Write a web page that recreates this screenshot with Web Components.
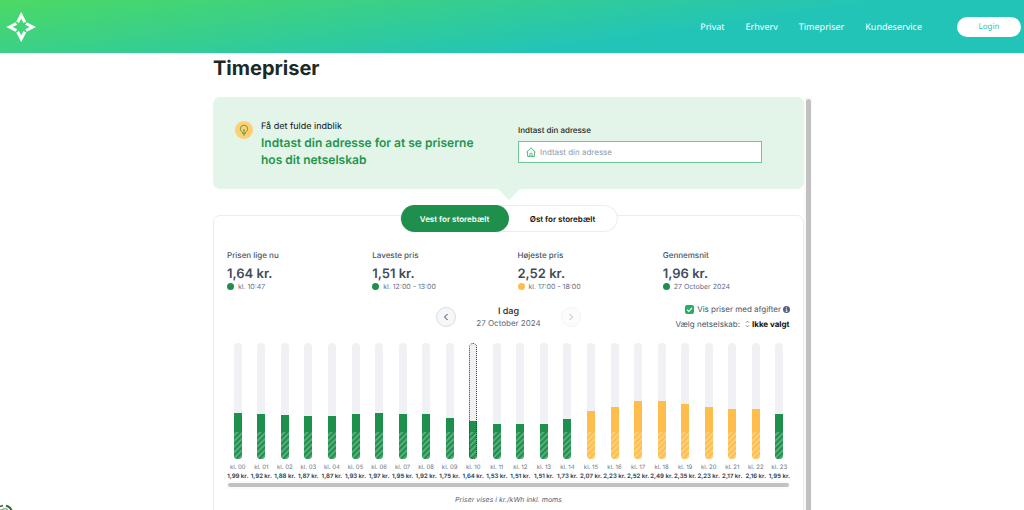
<!DOCTYPE html>
<html lang="da">
<head>
<meta charset="utf-8">
<meta name="viewport" content="width=device-width, initial-scale=1">
<title>Timepriser</title>
<style>
  html, body { margin: 0; height: 100%; }
  body {
    overflow: hidden;
    background: #fff;
    font-family: Inter, "Liberation Sans", sans-serif;
    text-rendering: geometricPrecision;
    color: #475467;
    --green: #1f8f4e;
    --amber: #ffbe4c;
    --line: #ececee;
  }
</style>
</head>
<body>
<price-page></price-page>

<script>
const define = (name, html, setup) => {
  const template = document.createElement('template');
  template.innerHTML = '<style>*{box-sizing:border-box} button,input,select{text-rendering:inherit}</style>' + html;
  customElements.define(name, class extends HTMLElement {
    connectedCallback() {
      if (this.shadowRoot) return;
      const root = this.attachShadow({ mode: 'open' });
      root.append(template.content.cloneNode(true));
      if (setup) setup(this, root);
    }
  });
};

define('site-header', `
  <style>
    :host { display: block; flex: none; }
    header {
      display: flex; align-items: center; height: 53px; padding: 0 3px 0 6px;
      background: linear-gradient(172deg, #4cd964, #22c4b8 65%);
      font-family: "Noto Sans", sans-serif; font-size: 9px;
    }
    .logo { display: block; width: 30px; height: 30px; }
    nav { display: flex; gap: 21px; margin-left: auto; margin-right: 35px; }
    nav a { color: #fff; text-decoration: none; }
    button {
      width: 64px; height: 20px; padding: 0; border: 0; border-radius: 10px;
      background: #fff; color: #2cc5b6; font: inherit; font-size: 8px;
    }
  </style>
  <header>
    <a class="logo" href="#" aria-label="Forside">
      <svg width="30" height="30" viewBox="0 0 30 30" fill="none" stroke="#fff" stroke-width="3">
        <path d="M11.600 10.300 15.200 3.200 18.800 10.300M11.600 19.700 15.200 26.800 18.800 19.700M10.400 11.500 3.600 15 10.400 18.500M20 11.500 26.800 15 20 18.500"/>
      </svg>
    </a>
    <nav>
      <a href="#">Privat</a><a href="#">Erhverv</a><a href="#">Timepriser</a><a href="#">Kundeservice</a>
    </nav>
    <button type="button">Login</button>
  </header>`);

define('address-banner', `
  <style>
    :host { display: block; }
    section {
      position: relative; display: grid; grid-template-columns: 1fr 244px; align-items: center;
      min-height: 92px; padding: 2px 42px 0 22px; border-radius: 7px; background: #e3f4e9;
    }
    section::after {
      content: ""; position: absolute; top: 100%; left: 50%; margin-left: -11px;
      border: 11px solid transparent; border-top-color: #e3f4e9; border-bottom: 0;
    }
    .intro { display: flex; gap: 8px; padding-right: 32px; }
    .bulb { flex: none; }
    p, h2 { margin: 0; }
    p { font-size: 9px; line-height: 12px; color: #111; }
    h2 { font-size: 12px; line-height: 17px; font-weight: 600; color: #23954f; margin-top: 1px; }
    label { display: block; font-size: 8px; line-height: 10px; font-weight: 500; color: #1d2b25; }
    .field {
      display: flex; align-items: center; gap: 4px; height: 22px; margin-top: 6px; padding: 0 7px;
      border: 1px solid #6fc793; background: #fff;
    }
    input { flex: 1; min-width: 0; border: 0; padding: 0; outline: 0; background: none; font: 8px Inter, sans-serif; }
    input::placeholder { color: #8f99ab; opacity: 1; }
  </style>
  <section>
    <div class="intro">
      <svg class="bulb" width="18" height="18" viewBox="0 0 18 18">
        <circle cx="9" cy="9" r="9" fill="#ffcf74"/>
        <path d="M7.600 11.400C6.200 10.400 5.300 9.300 5.300 7.900a3.700 3.700 0 0 1 7.400 0c0 1.400-.9 2.500-2.300 3.500v1.200H7.600zM9 12V9.300M7.900 8.600 9 9.500l1.100-.9M8 13.900h2" fill="none" stroke="#4f9a45" stroke-width=".9"/>
      </svg>
      <div>
        <p>Få det fulde indblik</p>
        <h2>Indtast din adresse for at se priserne hos dit netselskab</h2>
      </div>
    </div>
    <div>
      <label for="address">Indtast din adresse</label>
      <div class="field">
        <svg width="10" height="10" viewBox="0 0 10 10" fill="none" stroke="#3fae6c" stroke-width=".9" stroke-linejoin="round">
          <path d="M.5 5.200 5 .8l4.500 4.400M1.600 4.400v5h6.800v-5M3.900 9.200V7.300a1.100 1.100 0 0 1 2.200 0v1.900"/>
        </svg>
        <input id="address" type="text" placeholder="Indtast din adresse">
      </div>
    </div>
  </section>`);

define('region-toggle', `
  <style>
    :host { display: flex; width: 218px; height: 27px; border: 1px solid var(--line); border-radius: 14px; background: #fff; }
    button {
      flex: 1; margin: -1px 0; padding: 0; border: 0; border-radius: 14px; background: none;
      font: 600 8px Inter, sans-serif; color: #111;
    }
    button[aria-pressed="true"] { background: var(--green); color: #fff; }
  </style>
  <button type="button" aria-pressed="true">Vest for storebælt</button>
  <button type="button" aria-pressed="false">Øst for storebælt</button>`);

define('price-stat', `
  <style>
    :host { display: block; }
    .label { font-size: 8px; line-height: 10px; font-weight: 500; }
    .value { margin-top: 6px; font-size: 13px; line-height: 16px; font-weight: 600; color: #414b5a; }
    .when { display: flex; align-items: center; gap: 4px; font-size: 7px; line-height: 9px; color: #667085; }
    i { width: 7px; height: 7px; border-radius: 50%; background: var(--green); }
    :host([high]) i { background: var(--amber); }
  </style>
  <div class="label"><slot name="label"></slot></div>
  <div class="value"><slot></slot></div>
  <div class="when"><i></i><span><slot name="when"></slot></span></div>`);

define('day-picker', `
  <style>
    :host { display: flex; align-items: center; justify-content: space-between; width: 146px; }
    button {
      display: grid; place-items: center; width: 20px; height: 20px; padding: 0;
      border: 1px solid #d9dce2; border-radius: 50%; background: #f6f7f9; color: #344054;
    }
    button:disabled { border-color: #f3f4f5; background: #fcfcfc; color: #b4bac4; }
    div { text-align: center; font-size: 8px; line-height: 11px; color: #5d687b; }
    strong { display: block; font-size: 9px; line-height: 13px; font-weight: 500; color: #1c2430; }
  </style>
  <button type="button" aria-label="Forrige dag"><svg width="6" height="8" viewBox="0 0 6 8" fill="none" stroke="currentColor"><path d="M4.500 1 1.500 4l3 3"/></svg></button>
  <div><strong>I dag</strong>27 October 2024</div>
  <button type="button" aria-label="Næste dag" disabled><svg width="6" height="8" viewBox="0 0 6 8" fill="none" stroke="currentColor"><path d="m1.500 1 3 3-3 3"/></svg></button>`);

define('price-options', `
  <style>
    :host { display: flex; flex-direction: column; align-items: flex-end; gap: 3px; font-size: 8px; line-height: 12px; color: #475467; }
    div { display: flex; align-items: center; }
    input {
      appearance: none; width: 9px; height: 9px; margin: 0 3px 0 0; border-radius: 2px;
      background: #27ae60 url("data:image/svg+xml,%3Csvg xmlns='http://www.w3.org/2000/svg' viewBox='0 0 9 9'%3E%3Cpath d='M2 4.600 3.800 6.300 7 2.900' fill='none' stroke='white' stroke-width='1.200'/%3E%3C/svg%3E");
    }
    .info { margin-left: 2px; }
    .arrows { margin: 0 2px 0 5px; }
    select { appearance: none; border: 0; padding: 0; background: none; font: 700 8px/12px Inter, sans-serif; color: #111; }
  </style>
  <div>
    <input id="fees" type="checkbox" checked><label for="fees">Vis priser med afgifter</label>
    <svg class="info" width="7" height="7" viewBox="0 0 7 7"><circle cx="3.500" cy="3.500" r="3.500" fill="#56627a"/><path d="M3.500 1.300v1M2.800 3.200h.8v2.100M2.600 5.400h1.900" stroke="#fff" stroke-width=".8" fill="none"/></svg>
  </div>
  <div>
    <label for="grid">Vælg netselskab:</label>
    <svg class="arrows" width="5" height="8" viewBox="0 0 5 8" fill="none" stroke="#6b7484" stroke-width=".8"><path d="M.8 2.800 2.500 1.100l1.700 1.700M.8 5.200l1.700 1.700 1.700-1.700"/></svg>
    <select id="grid"><option>Ikke valgt</option></select>
  </div>`);

define('hour-bar', `
  <style>
    :host { display: flex; flex-direction: column; align-items: center; flex: 1 1 0; min-width: 0; white-space: nowrap; --tone: var(--green); --soft: #58ad7b; }
    :host([high]) { --tone: var(--amber); --soft: #ffd07c; }
    .track { display: flex; align-items: flex-end; position: relative; width: 8px; height: 116px; border-radius: 4px; overflow: hidden; background: #f0f1f5; }
    .fill { display: flex; align-items: flex-end; width: 100%; background: var(--tone); }
    .fill::after { content: ""; width: 100%; height: 27px; background: repeating-linear-gradient(135deg, var(--tone) 0 1px, var(--soft) 2px 3px, var(--tone) 4px); }
    :host([now]) .track::after { content: ""; position: absolute; inset: 0; border: 1px dotted #333b38; border-radius: 4px; }
    .hour { margin-top: 5px; font-size: 6px; line-height: 8px; color: #667085; }
    .price { font-size: 6px; line-height: 9px; font-weight: 700; color: #414b5a; }
  </style>
  <div class="track"><div class="fill"></div></div>
  <div class="hour"></div>
  <div class="price"></div>`,
  (host, root) => {
    const price = Number(host.getAttribute('price'));
    root.querySelector('.fill').style.height = price / 5 * 100 + '%';
    root.querySelector('.hour').textContent = 'kl. ' + host.getAttribute('hour');
    root.querySelector('.price').textContent = price.toFixed(2).replace('.', ',') + ' kr.';
  });

define('price-chart', `
  <style>
    :host { display: block; }
    .bars { display: flex; margin: 0 -1px; }
    .rail { height: 8px; padding: 2px 1px; background: #fafafa; }
    .rail::before { content: ""; display: block; height: 4px; border-radius: 2px; background: #c1c1c1; }
    p { margin: 5px 0 0; text-align: center; font-size: 7px; line-height: 12px; font-style: italic; color: #56627a; }
  </style>
  <div class="bars"></div>
  <div class="rail"></div>
  <p>Priser vises i kr./kWh inkl. moms</p>`,
  (host, root) => {
    const prices = [1.99, 1.92, 1.88, 1.87, 1.87, 1.93, 1.97, 1.95, 1.92, 1.75, 1.64, 1.53,
                    1.51, 1.51, 1.73, 2.07, 2.23, 2.52, 2.49, 2.35, 2.23, 2.17, 2.16, 1.95];
    prices.forEach((price, hour) => {
      const bar = document.createElement('hour-bar');
      bar.setAttribute('hour', String(hour).padStart(2, '0'));
      bar.setAttribute('price', price);
      bar.toggleAttribute('high', price > 2);
      bar.toggleAttribute('now', hour === 10);
      root.querySelector('.bars').append(bar);
    });
  });

define('price-card', `
  <style>
    :host { display: block; margin-top: 26px; padding: 0 13px; border: 1px solid var(--line); border-radius: 7px; height: 100vh; }
    region-toggle { margin: -11px auto 0; position: relative; }
    .stats { display: grid; grid-template-columns: repeat(4, 1fr); margin: 18px -18px 0 0; }
    .controls { display: grid; grid-template-columns: 1fr auto 1fr; align-items: center; margin-top: 12px; }
    day-picker { grid-column: 2; }
    price-chart { margin-top: 13px; }
  </style>
  <region-toggle></region-toggle>
  <div class="stats">
    <price-stat><span slot="label">Prisen lige nu</span>1,64 kr.<span slot="when">kl. 10:47</span></price-stat>
    <price-stat><span slot="label">Laveste pris</span>1,51 kr.<span slot="when">kl. 12:00 - 13:00</span></price-stat>
    <price-stat high><span slot="label">Højeste pris</span>2,52 kr.<span slot="when">kl. 17:00 - 18:00</span></price-stat>
    <price-stat><span slot="label">Gennemsnit</span>1,96 kr.<span slot="when">27 October 2024</span></price-stat>
  </div>
  <div class="controls"><day-picker></day-picker><price-options></price-options></div>
  <price-chart></price-chart>`);

define('scroll-pane', `
  <style>
    :host { display: flex; flex: 1; min-height: 0; overflow: hidden; }
    .content { flex: 1; min-width: 0; }
    .rail { width: 8px; padding: 2px 1px 0 2px; background: #fafafa; }
    .rail::before { content: ""; display: block; height: 110%; border-radius: 3px; background: #c1c1c1; }
  </style>
  <div class="content"><slot></slot></div>
  <div class="rail"></div>`);

define('cookie-badge', `
  <style>
    :host { position: fixed; left: 0; bottom: 0; width: 14px; height: 9px; }
    button { display: block; padding: 0; border: 0; background: none; }
  </style>
  <button type="button" aria-label="Cookieindstillinger">
    <svg width="14" height="9" viewBox="0 0 14 9" fill="none">
      <path d="M6 1.800A8 8 0 0 1 12 8.500" stroke="#2f6a3a" stroke-width="2"/>
      <path d="M0 2.500 3 1.500" stroke="#2f6a3a" stroke-width="1.500"/>
      <circle cx="5" cy="7.500" r="2.800" stroke="#8fa793" stroke-width="1.200"/>
      <path d="M0 6.500 1.500 5M4 8l2-1" stroke="#4a7a52"/>
    </svg>
  </button>`);

define('price-page', `
  <style>
    :host { display: flex; flex-direction: column; height: 100vh; }
    main { display: flex; flex-direction: column; flex: 1; min-height: 0; width: 100%; max-width: 600px; margin: 0 auto; }
    h1 { margin: 3px 0 17px 1px; font-size: 20px; line-height: 24px; font-weight: 700; color: #1b2a22; }
    scroll-pane { margin-left: 1px; }
  </style>
  <site-header></site-header>
  <main>
    <h1>Timepriser</h1>
    <scroll-pane>
      <address-banner></address-banner>
      <price-card></price-card>
    </scroll-pane>
  </main>
  <cookie-badge></cookie-badge>`);
</script>
</body>
</html>
